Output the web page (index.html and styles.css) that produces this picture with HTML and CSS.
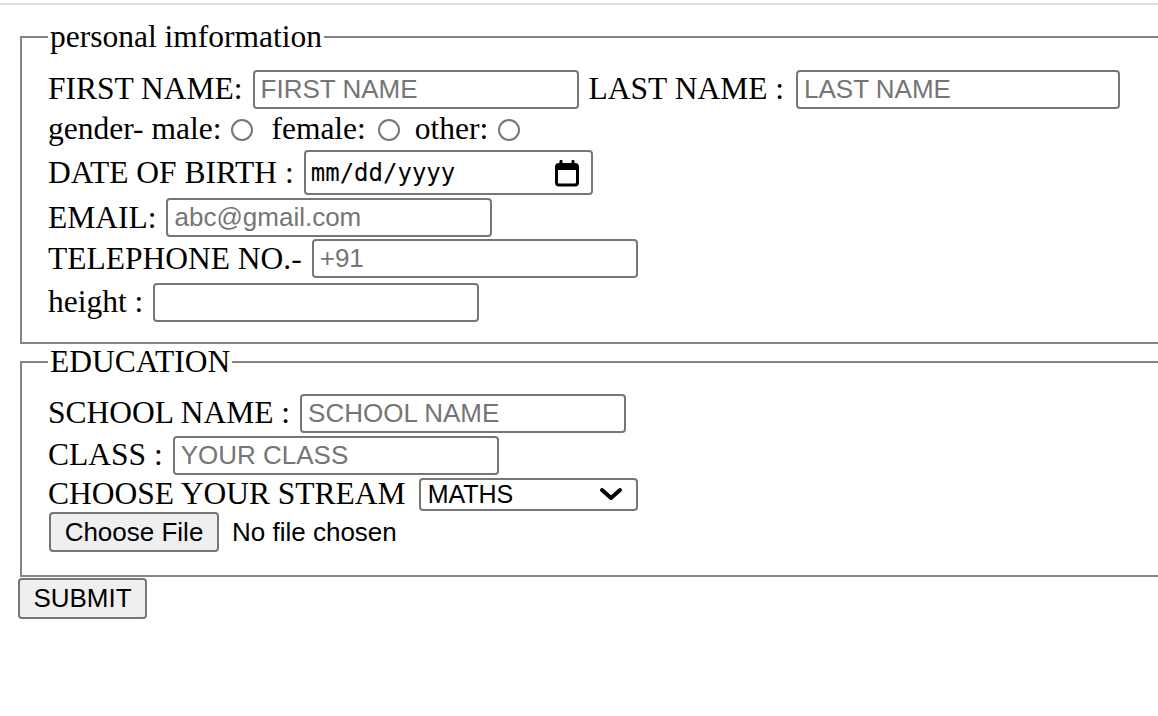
FILE: index.html
```html
<!DOCTYPE html>
<html lang="en">
<head>
<meta charset="utf-8">
<title>Form</title>
<link rel="stylesheet" href="styles.css">
</head>
<body>
<div class="topline"></div>
<form class="form">
  <fieldset class="group group-personal">
    <legend class="group-title">personal imformation</legend>
    <div class="row row-first">
      <label class="lbl">FIRST NAME:</label>
      <input class="field" type="text" placeholder="FIRST NAME">
      <label class="lbl lbl-after">LAST NAME :</label>
      <input class="field field-last" type="text" placeholder="LAST NAME">
    </div>
    <div class="row row-gender">
      <span class="lbl">gender- male:</span>
      <input class="radio radio-male" type="radio" name="g">
      <span class="lbl">female:</span>
      <input class="radio radio-female" type="radio" name="g">
      <span class="lbl">other:</span>
      <input class="radio radio-other" type="radio" name="g">
    </div>
    <div class="row row-date">
      <label class="lbl">DATE OF BIRTH :</label>
      <div class="date">
        <span class="date-text">mm/dd/yyyy</span>
        <svg class="cal" width="26" height="28" viewBox="0 0 26 28"><rect x="2.5" y="5.5" width="21" height="20.5" rx="2.5" fill="none" stroke="#000" stroke-width="3"/><rect x="2" y="5" width="22" height="6" rx="1.5" fill="#000"/><rect x="5.5" y="1" width="3" height="6" rx="1" fill="#000"/><rect x="17.5" y="1" width="3" height="6" rx="1" fill="#000"/></svg>
      </div>
    </div>
    <div class="row row-email">
      <label class="lbl">EMAIL:</label>
      <input class="field" type="email" placeholder="abc@gmail.com">
    </div>
    <div class="row row-tel">
      <label class="lbl">TELEPHONE NO.-</label>
      <input class="field" type="tel" placeholder="+91">
    </div>
    <div class="row row-height">
      <label class="lbl">height :</label>
      <input class="field" type="text">
    </div>
  </fieldset>
  <fieldset class="group group-edu">
    <legend class="group-title">EDUCATION</legend>
    <div class="row row-school">
      <label class="lbl">SCHOOL NAME :</label>
      <input class="field" type="text" placeholder="SCHOOL NAME">
    </div>
    <div class="row row-class">
      <label class="lbl">CLASS :</label>
      <input class="field" type="text" placeholder="YOUR CLASS">
    </div>
    <div class="row row-stream">
      <label class="lbl">CHOOSE YOUR STREAM</label>
      <div class="select">
        <span class="select-text">MATHS</span>
        <svg class="chev" width="24" height="14" viewBox="0 0 24 14"><path d="M3 3 L12 11 L21 3" fill="none" stroke="#000" stroke-width="4" stroke-linecap="round" stroke-linejoin="round"/></svg>
      </div>
    </div>
    <div class="row row-file">
      <button class="btn btn-file" type="button">Choose File</button>
      <span class="file-text">No file chosen</span>
    </div>
  </fieldset>
  <button class="btn btn-submit" type="submit">SUBMIT</button>
</form>
</body>
</html>
```
FILE: styles.css
```css
html, body {
  overflow: hidden;
}
body {
  margin: 0;
  padding: 0 0 0 18px;
  background: #fff;
  color: #000;
  font-family: "Liberation Serif", "Times New Roman", serif;
  font-size: 31.5px;
}
.topline {
  height: 2px;
  margin: 3px 0 0 -18px;
  background: #dedede;
}
.form {
  margin-top: 14px;
}
.group {
  margin: 0 0 0 2px;
  padding: 13px 0 17px 26px;
  border: 2px solid #858585;
  border-right: none;
  min-width: 0;
}
.group-edu {
  padding-top: 12px;
  padding-bottom: 23px;
}
.group-title {
  padding: 0 2px;
  line-height: 36px;
  font-size: 31.5px;
}
.row {
  display: flex;
  align-items: center;
}
.row-first { height: 42px; }
.row-gender { height: 38px; }
.row-date { height: 49px; }
.row-email { height: 41px; }
.row-tel { height: 41px; }
.row-height { height: 46px; }
.row-school { height: 42px; }
.row-class { height: 42px; }
.row-stream { height: 36px; }
.row-file { height: 40px; }
.lbl {
  white-space: pre;
  line-height: 36px;
}
.lbl-after {
  margin-left: 10px;
}
.field {
  box-sizing: border-box;
  margin: 0 0 0 10px;
  width: 326px;
  height: 39px;
  padding: 0 6px;
  border: 2px solid #767676;
  border-radius: 4px;
  background: #fff;
  color: #000;
  font-family: "Liberation Sans", Arial, sans-serif;
  font-size: 26px;
  outline: none;
}
.field-last {
  margin-left: 12px;
  width: 324px;
}
.field::placeholder {
  color: #757575;
}
.radio {
  appearance: none;
  -webkit-appearance: none;
  box-sizing: border-box;
  width: 22px;
  height: 22px;
  margin: 0;
  border: 2px solid #767676;
  border-radius: 50%;
  background: #fff;
}
.radio-male { margin: 2px 18px 0 10px; }
.radio-female { margin: 2px 15px 0 12px; }
.radio-other { margin: 2px 0 0 10px; }
.date {
  box-sizing: border-box;
  margin-left: 10px;
  width: 289px;
  height: 45px;
  display: flex;
  align-items: center;
  justify-content: space-between;
  padding: 0 11px 0 5px;
  border: 2px solid #767676;
  border-radius: 4px;
  font-family: "DejaVu Sans Mono", monospace;
  font-size: 24px;
}
.cal {
  display: block;
}
.select {
  box-sizing: border-box;
  margin-left: 13px;
  width: 219px;
  height: 33px;
  display: flex;
  align-items: center;
  justify-content: space-between;
  padding: 0 13px 0 7px;
  border: 2px solid #767676;
  border-radius: 4px;
  font-family: "Liberation Sans", Arial, sans-serif;
  font-size: 25px;
}
.chev {
  display: block;
}
.btn {
  box-sizing: border-box;
  margin: 0;
  padding: 0;
  border: 2px solid #767676;
  border-radius: 4px;
  background: #efefef;
  color: #000;
  font-family: "Liberation Sans", Arial, sans-serif;
  font-size: 26px;
}
.btn-file {
  width: 170px;
  height: 40px;
  margin-left: 1px;
}
.file-text {
  margin-left: 13px;
  font-family: "Liberation Sans", Arial, sans-serif;
  font-size: 26px;
}
.btn-submit {
  display: block;
  margin-top: 1px;
  width: 129px;
  height: 41px;
}
```
